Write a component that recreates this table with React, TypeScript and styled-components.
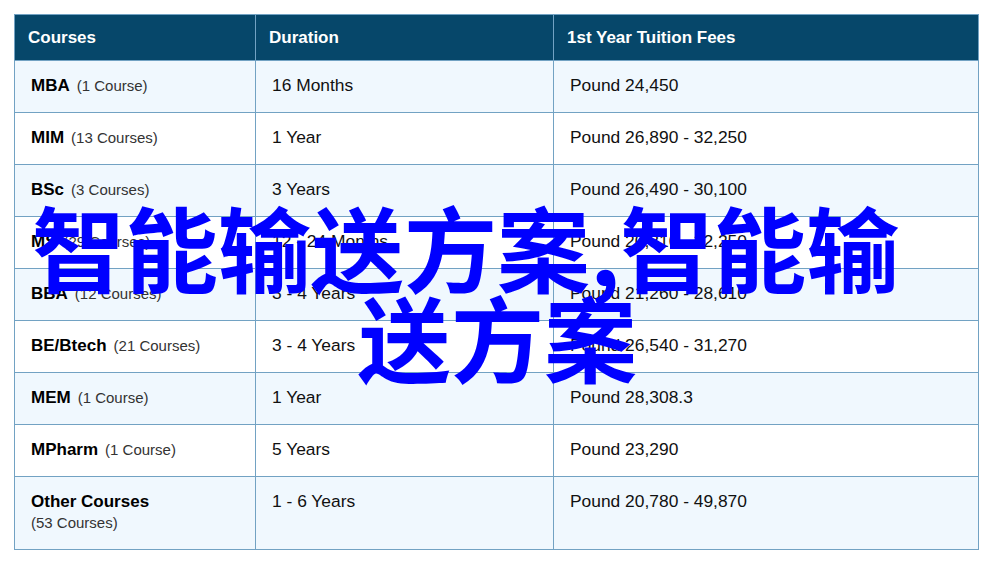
import React from "react";
import styled, { createGlobalStyle } from "styled-components";

const GlobalStyle = createGlobalStyle`
  html, body {
    margin: 0;
    padding: 0;
    background: #ffffff;
  }
  body {
    font-family: "Liberation Sans", Arial, sans-serif;
  }
`;

const Page = styled.div`
  position: relative;
  padding: 14px;
  width: 993px;
  height: 570px;
  box-sizing: border-box;
  overflow: hidden;
`;

const Table = styled.div`
  display: flex;
  flex-direction: column;
  width: 965px;
  box-sizing: border-box;
  border-left: 1px solid #72a2c3;
  border-top: 1px solid #72a2c3;
`;

const Row = styled.div<{ $tone: "head" | "alt" | "plain" }>`
  display: grid;
  grid-template-columns: 241px 298px 425px;
  background: ${(p) =>
    p.$tone === "head" ? "#06476a" : p.$tone === "alt" ? "#f0f8fe" : "#ffffff"};
`;

const HeadCell = styled.div`
  box-sizing: border-box;
  padding: 12px 13px;
  border-right: 1px solid #72a2c3;
  border-bottom: 1px solid #72a2c3;
  font-size: 17px;
  line-height: 21px;
  font-weight: 700;
  color: #ffffff;
`;

const Cell = styled.div`
  box-sizing: border-box;
  padding: 14px 16px 16px;
  border-right: 1px solid #72a2c3;
  border-bottom: 1px solid #72a2c3;
  font-size: 17.4px;
  line-height: 21px;
  color: #111111;
`;

const Name = styled.span`
  font-size: 17px;
  font-weight: 700;
  color: #000000;
`;

const Count = styled.span<{ $block?: boolean }>`
  display: ${(p) => (p.$block ? "block" : "inline")};
  margin-left: ${(p) => (p.$block ? "0" : "7px")};
  font-size: 15px;
  color: #333333;
`;

const Overlay = styled.div`
  position: absolute;
  left: 32px;
  top: 201px;
  font-family: "Noto Sans CJK SC", "Noto Sans", sans-serif;
  font-weight: 700;
  font-size: 93px;
  line-height: 90px;
  color: #0000ff;
  white-space: nowrap;
  pointer-events: none;
`;

const OverlayLine = styled.div<{ $indent?: number }>`
  padding-left: ${(p) => p.$indent ?? 0}px;
`;

type Course = {
  name: string;
  count: string;
  duration: string;
  fee: string;
  block?: boolean;
};

const courses: Course[] = [
  { name: "MBA", count: "(1 Course)", duration: "16 Months", fee: "Pound 24,450" },
  { name: "MIM", count: "(13 Courses)", duration: "1 Year", fee: "Pound 26,890 - 32,250" },
  { name: "BSc", count: "(3 Courses)", duration: "3 Years", fee: "Pound 26,490 - 30,100" },
  { name: "MS", count: "(29 Courses)", duration: "12 - 24 Months", fee: "Pound 20,310 - 32,250" },
  { name: "BBA", count: "(12 Courses)", duration: "3 - 4 Years", fee: "Pound 21,260 - 28,610" },
  { name: "BE/Btech", count: "(21 Courses)", duration: "3 - 4 Years", fee: "Pound 26,540 - 31,270" },
  { name: "MEM", count: "(1 Course)", duration: "1 Year", fee: "Pound 28,308.3" },
  { name: "MPharm", count: "(1 Course)", duration: "5 Years", fee: "Pound 23,290" },
  {
    name: "Other Courses",
    count: "(53 Courses)",
    duration: "1 - 6 Years",
    fee: "Pound 20,780 - 49,870",
    block: true,
  },
];

export default function App() {
  return (
    <>
      <GlobalStyle />
      <Page>
        <Table>
          <Row $tone="head">
            <HeadCell>Courses</HeadCell>
            <HeadCell>Duration</HeadCell>
            <HeadCell>1st Year Tuition Fees</HeadCell>
          </Row>
          {courses.map((c, i) => (
            <Row key={c.name} $tone={i % 2 === 0 ? "alt" : "plain"}>
              <Cell>
                <Name>{c.name}</Name>
                <Count $block={c.block}>{c.count}</Count>
              </Cell>
              <Cell>{c.duration}</Cell>
              <Cell>{c.fee}</Cell>
            </Row>
          ))}
        </Table>
        <Overlay>
          <OverlayLine>智能输送方案,智能输</OverlayLine>
          <OverlayLine $indent={326}>送方案</OverlayLine>
        </Overlay>
      </Page>
    </>
  );
}
